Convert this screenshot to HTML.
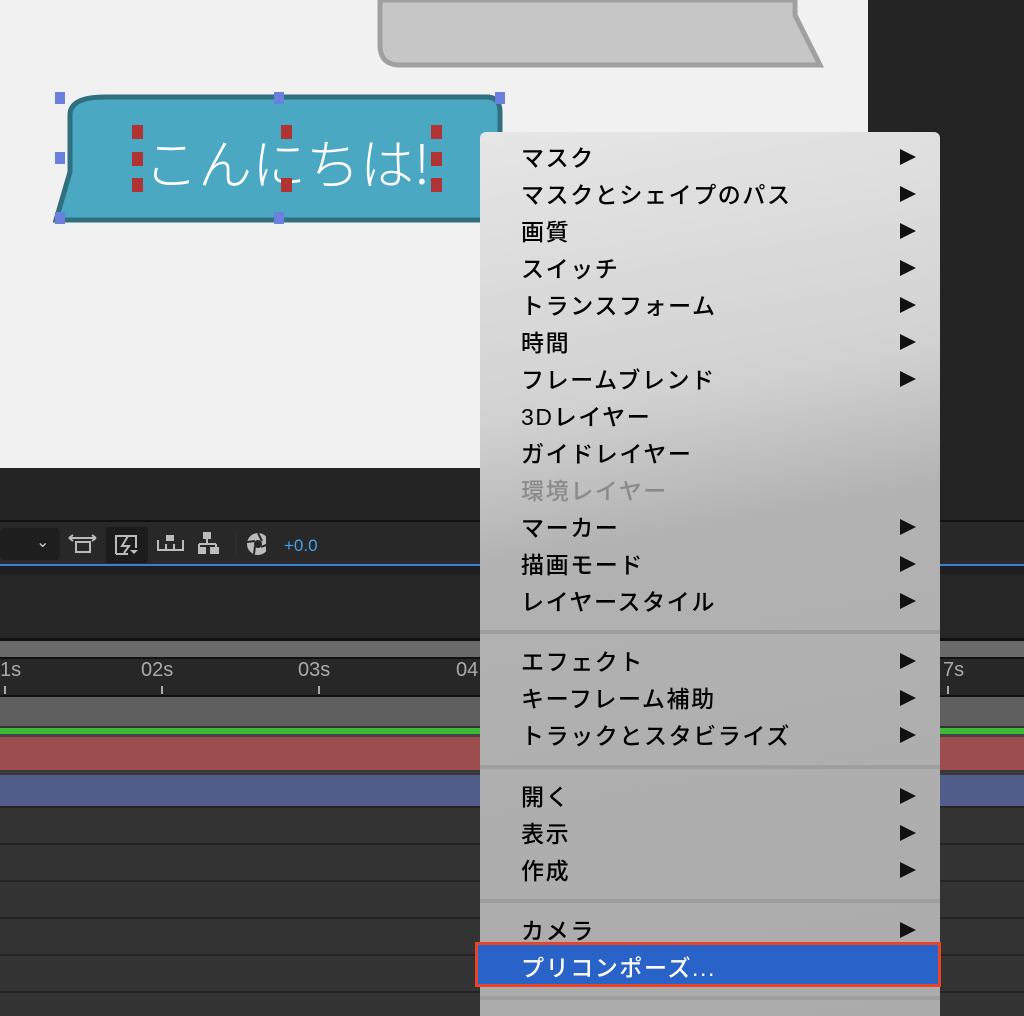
<!DOCTYPE html>
<html><head><meta charset="utf-8"><style>
body{margin:0;width:1024px;height:1016px;overflow:hidden;background:#242424;position:relative;font-family:"Liberation Sans","Noto Sans CJK JP",sans-serif}
.a{position:absolute}
.h{position:absolute;width:10px;height:12px;background:#6b7fdc}
.r{position:absolute;width:11px;height:14px;background:#b03434}
.menu{position:absolute;left:480px;top:132px;width:460px;height:884px;border-radius:6px 6px 0 0;background:linear-gradient(170deg,#e6e6e6 0%,#d2d2d2 30%,#b2b2b2 45%,#acabab 100%);overflow:visible}
.it{position:absolute;left:41px;font-size:23px;color:#000;line-height:26px;letter-spacing:1.6px;font-weight:500}
.ar{position:absolute;left:420px;width:0;height:0;border-top:8px solid transparent;border-bottom:8px solid transparent;border-left:16px solid #111}
.sep{position:absolute;left:0;width:460px;height:4px;background:#9e9e9e}
</style></head><body>
<div class="a" style="left:0;top:0;width:868px;height:468px;background:#f1f1f1"></div>
<svg class="a" style="left:0;top:0" width="868" height="468">
<path d="M380 0 V45 Q380 65 400 65 H820 L795 15 V0 Z" fill="#c6c6c6" stroke="#a0a0a0" stroke-width="5"/>
<path d="M105 97 H487 Q500 97 500 112 V215 Q500 220 495 220 H56 L70 172 V115 Q70 97 105 97 Z" fill="#4ba8c2" stroke="#2f6f80" stroke-width="5"/>
<text x="144" y="184" font-size="54" fill="#fff" font-family="Noto Sans CJK JP,sans-serif" font-weight="300">こんにちは!</text>
</svg>
<div class="h" style="left:55px;top:92px"></div><div class="h" style="left:274px;top:92px"></div><div class="h" style="left:495px;top:92px"></div>
<div class="h" style="left:55px;top:152px"></div>
<div class="h" style="left:55px;top:212px"></div><div class="h" style="left:274px;top:212px"></div>
<div class="r" style="left:132px;top:125px"></div><div class="r" style="left:132px;top:152px"></div><div class="r" style="left:132px;top:178px"></div>
<div class="r" style="left:281px;top:125px"></div><div class="r" style="left:281px;top:178px"></div>
<div class="r" style="left:431px;top:125px"></div><div class="r" style="left:431px;top:152px"></div><div class="r" style="left:431px;top:178px"></div>
<div class="a" style="left:0;top:468px;width:868px;height:52px;background:#242424"></div>
<div class="a" style="left:0;top:520px;width:1024px;height:2px;background:#111"></div>
<div class="a" style="left:0;top:522px;width:1024px;height:42px;background:#282828"></div>
<div class="a" style="left:0;top:528px;width:60px;height:32px;background:#1e1e1e;border-radius:4px"></div>
<div class="a" style="left:36px;top:532px;color:#ccc;font-size:16px">⌄</div>
<div class="a" style="left:106px;top:527px;width:42px;height:36px;background:#1c1c1c;border-radius:3px"></div>
<svg class="a" style="left:66px;top:528px" width="200" height="32">
<g stroke="#bbb" stroke-width="2" fill="none"><path d="M3 10 H30 M3 10 l4-3 M3 10 l4 3 M30 10 l-4-3 M30 10 l-4 3"/><rect x="10" y="14" width="14" height="10"/>
<path d="M50 26 V8 H70 V20 M50 26 H62"/><path d="M62 8 L56 18 H63 L58 25" stroke-width="2"/>
<path d="M92 12 V22 H117 V12 M100 16 V22 M108 16 V22"/></g>
<path d="M64 22 l8 0 -4 4z" fill="#bbb"/>
<rect x="100" y="7" width="8" height="6" fill="#bbb"/>
<rect x="137" y="4" width="8" height="7" fill="#bbb"/><path d="M141 11 V16 M133 16 H150 M133 16 V19 M150 16 V19" stroke="#bbb" stroke-width="2"/>
<rect x="132" y="19" width="8" height="7" fill="#bbb"/><rect x="144" y="19" width="9" height="7" fill="#bbb"/>
<line x1="170" y1="2" x2="170" y2="30" stroke="#333" stroke-width="1"/>
<circle cx="192" cy="16" r="11" fill="#bbb"/><circle cx="192" cy="16" r="4" fill="#282828"/>
<path d="M192 5 L196 13 M203 16 L195 19 M188 26 L189 18 M181 14 L189 13" stroke="#282828" stroke-width="2"/>
</svg>
<div class="a" style="left:284px;top:536px;color:#4a9fe8;font-size:17px">+0.0</div>
<div class="a" style="left:0;top:564px;width:1024px;height:2px;background:#3d7fd0"></div>
<div class="a" style="left:0;top:566px;width:1024px;height:8px;background:#1e1e1e"></div>
<div class="a" style="left:0;top:574px;width:1024px;height:64px;background:#262626"></div>
<div class="a" style="left:0;top:638px;width:1024px;height:3px;background:#111"></div>
<div class="a" style="left:0;top:641px;width:1024px;height:16px;background:#6a6a6a"></div>
<div class="a" style="left:0;top:657px;width:1024px;height:2px;background:#111"></div>
<div class="a" style="left:0;top:659px;width:1024px;height:36px;background:#272727"></div>
<div class="a" style="left:0;top:659px;color:#aaa;font-size:20px">1s</div>
<div class="a" style="left:141px;top:659px;color:#aaa;font-size:20px">02s</div>
<div class="a" style="left:298px;top:659px;color:#aaa;font-size:20px">03s</div>
<div class="a" style="left:456px;top:659px;color:#aaa;font-size:20px">04</div>
<div class="a" style="left:943px;top:659px;color:#aaa;font-size:20px">7s</div>
<div class="a" style="left:4px;top:686px;width:2px;height:8px;background:#aaa"></div>
<div class="a" style="left:161px;top:686px;width:2px;height:8px;background:#aaa"></div>
<div class="a" style="left:318px;top:686px;width:2px;height:8px;background:#aaa"></div>
<div class="a" style="left:947px;top:686px;width:2px;height:8px;background:#aaa"></div>
<div class="a" style="left:0;top:695px;width:1024px;height:2px;background:#111"></div>
<div class="a" style="left:0;top:697px;width:1024px;height:29px;background:#5f5f5f"></div>
<div class="a" style="left:0;top:726px;width:1024px;height:2px;background:#333"></div>
<div class="a" style="left:0;top:728px;width:1024px;height:6px;background:#3fb83a"></div>
<div class="a" style="left:0;top:734px;width:1024px;height:3px;background:#444"></div>
<div class="a" style="left:0;top:737px;width:1024px;height:33px;background:#9c4e4e"></div>
<div class="a" style="left:0;top:770px;width:1024px;height:5px;background:#3a3a3a"></div>
<div class="a" style="left:0;top:775px;width:1024px;height:31px;background:#525c8a"></div>
<div class="a" style="left:0;top:806px;width:1024px;height:210px;background:repeating-linear-gradient(#242424 0,#242424 2px,#333 2px,#333 37px)"></div>
<div class="menu">
<div class="it" style="top:13px">マスク</div><div class="ar" style="top:17px"></div>
<div class="it" style="top:50px">マスクとシェイプのパス</div><div class="ar" style="top:54px"></div>
<div class="it" style="top:87px">画質</div><div class="ar" style="top:91px"></div>
<div class="it" style="top:124px">スイッチ</div><div class="ar" style="top:128px"></div>
<div class="it" style="top:161px">トランスフォーム</div><div class="ar" style="top:165px"></div>
<div class="it" style="top:198px">時間</div><div class="ar" style="top:202px"></div>
<div class="it" style="top:235px">フレームブレンド</div><div class="ar" style="top:239px"></div>
<div class="it" style="top:272px">3Dレイヤー</div>
<div class="it" style="top:309px">ガイドレイヤー</div>
<div class="it" style="top:346px;color:#8a8a8a">環境レイヤー</div>
<div class="it" style="top:383px">マーカー</div><div class="ar" style="top:387px"></div>
<div class="it" style="top:420px">描画モード</div><div class="ar" style="top:424px"></div>
<div class="it" style="top:457px">レイヤースタイル</div><div class="ar" style="top:461px"></div>
<div class="sep" style="top:498px"></div>
<div class="it" style="top:517px">エフェクト</div><div class="ar" style="top:521px"></div>
<div class="it" style="top:554px">キーフレーム補助</div><div class="ar" style="top:558px"></div>
<div class="it" style="top:591px">トラックとスタビライズ</div><div class="ar" style="top:595px"></div>
<div class="sep" style="top:633px"></div>
<div class="it" style="top:652px">開く</div><div class="ar" style="top:656px"></div>
<div class="it" style="top:689px">表示</div><div class="ar" style="top:693px"></div>
<div class="it" style="top:726px">作成</div><div class="ar" style="top:730px"></div>
<div class="sep" style="top:767px"></div>
<div class="it" style="top:786px">カメラ</div><div class="ar" style="top:790px"></div>
<div class="a" style="left:-5px;top:810px;width:466px;height:45px;background:#2a63c8;border:3px solid #e8442a;box-sizing:border-box"></div>
<div class="it" style="top:823px;color:#fff">プリコンポーズ...</div>
<div class="sep" style="top:864px"></div>
</div>
</body></html>
